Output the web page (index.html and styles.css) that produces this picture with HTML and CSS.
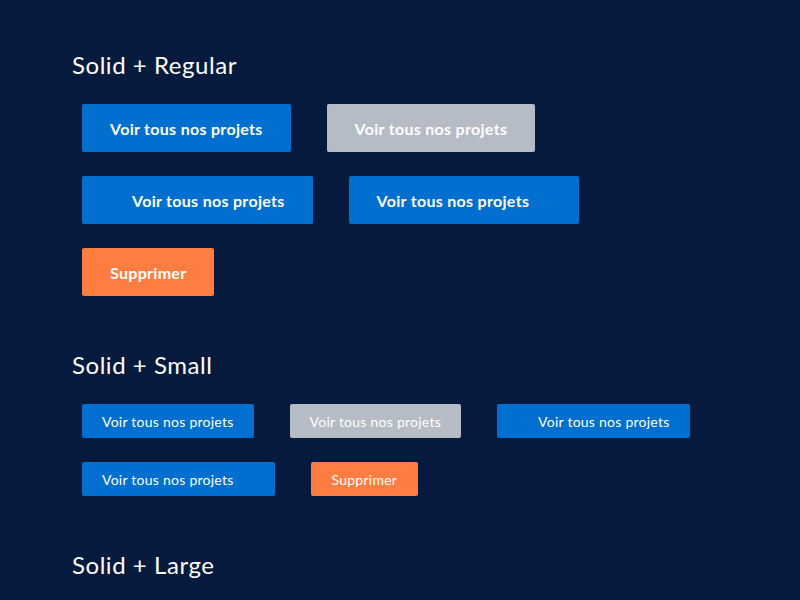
FILE: index.html
```html
<!DOCTYPE html>
<html lang="fr">
<head>
<meta charset="utf-8">
<title>Buttons</title>
<link rel="stylesheet" href="styles.css">
</head>
<body>
<main class="page">
  <section class="section">
    <h2 class="title">Solid + Regular</h2>
    <div class="rows">
      <div class="row">
        <button class="btn btn-reg btn-blue">Voir tous nos projets</button>
        <button class="btn btn-reg btn-gray">Voir tous nos projets</button>
      </div>
      <div class="row">
        <button class="btn btn-reg btn-blue"><span class="ico ico-l"></span>Voir tous nos projets</button>
        <button class="btn btn-reg btn-blue">Voir tous nos projets<span class="ico ico-r"></span></button>
      </div>
      <div class="row">
        <button class="btn btn-reg btn-orange">Supprimer</button>
      </div>
    </div>
  </section>
  <section class="section">
    <h2 class="title">Solid + Small</h2>
    <div class="rows">
      <div class="row">
        <button class="btn btn-sm btn-blue">Voir tous nos projets</button>
        <button class="btn btn-sm btn-gray">Voir tous nos projets</button>
        <button class="btn btn-sm btn-blue"><span class="ico ico-l"></span>Voir tous nos projets</button>
      </div>
      <div class="row">
        <button class="btn btn-sm btn-blue">Voir tous nos projets<span class="ico ico-r"></span></button>
        <button class="btn btn-sm btn-orange">Supprimer</button>
      </div>
    </div>
  </section>
  <section class="section">
    <h2 class="title">Solid + Large</h2>
  </section>
</main>
</body>
</html>
```

FILE: styles.css
```css
html, body {
  margin: 0;
  padding: 0;
  background: #051a3c;
}
body {
  font-family: Lato, "Open Sans", sans-serif;
  color: #ffffff;
}
.page {
  padding: 50px 72px 0;
  display: flex;
  flex-direction: column;
  gap: 54px;
}
.title {
  margin: 0 0 24px;
  font-size: 24px;
  line-height: 30px;
  font-weight: 400;
  letter-spacing: 0.55px;
  color: #ffffff;
}
.rows {
  display: flex;
  flex-direction: column;
  gap: 24px;
  padding-left: 10px;
}
.row {
  display: flex;
  gap: 36px;
}
.btn {
  display: inline-flex;
  align-items: center;
  border: none;
  border-radius: 2px;
  color: #ffffff;
  font-family: inherit;
  cursor: pointer;
  white-space: nowrap;
}
.btn-reg {
  height: 48px;
  padding: 0 28px;
  font-size: 16px;
  font-weight: 700;
  letter-spacing: 0.3px;
}
.btn-sm {
  height: 34px;
  padding: 0 20px;
  font-size: 14px;
  font-weight: 400;
  letter-spacing: 0.25px;
}
.ico {
  width: 16px;
  height: 16px;
  flex: none;
}
.ico-l { margin-right: 6px; }
.ico-r { margin-left: 6px; }
.btn-sm .ico-l { margin-right: 5px; }
.btn-sm .ico-r { margin-left: 5px; }
.btn-orange.btn-sm { padding: 0 21px; }
.btn-blue { background: #006fcf; }
.btn-gray { background: #b6bcc6; }
.btn-orange { background: #ff7d41; }
```
